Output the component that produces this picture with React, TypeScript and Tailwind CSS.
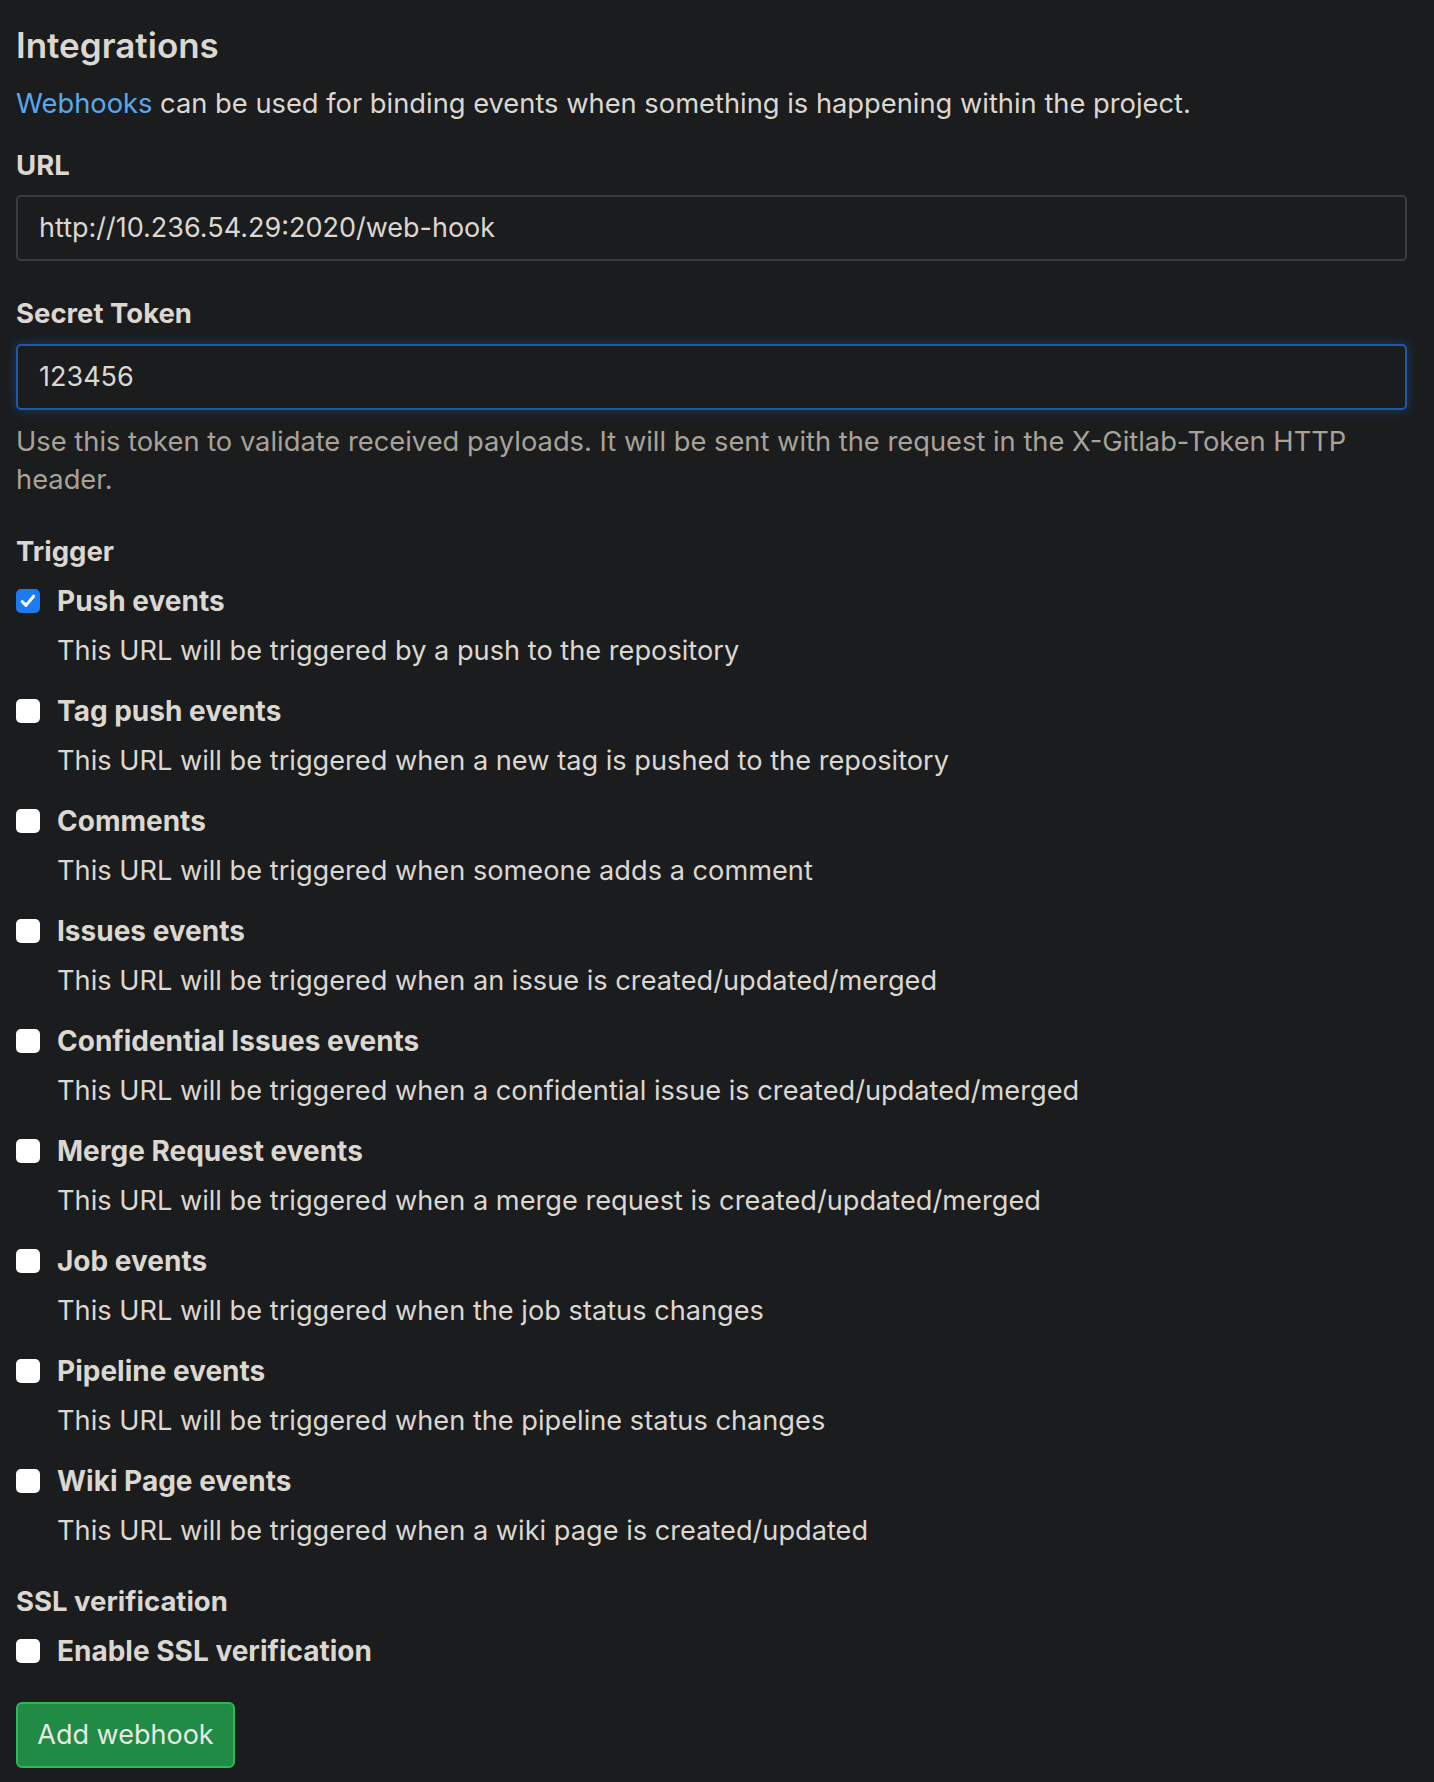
import React from "react";

const triggers = [
  { label: "Push events", desc: "This URL will be triggered by a push to the repository", checked: true },
  { label: "Tag push events", desc: "This URL will be triggered when a new tag is pushed to the repository" },
  { label: "Comments", desc: "This URL will be triggered when someone adds a comment" },
  { label: "Issues events", desc: "This URL will be triggered when an issue is created/updated/merged" },
  { label: "Confidential Issues events", desc: "This URL will be triggered when a confidential issue is created/updated/merged" },
  { label: "Merge Request events", desc: "This URL will be triggered when a merge request is created/updated/merged" },
  { label: "Job events", desc: "This URL will be triggered when the job status changes" },
  { label: "Pipeline events", desc: "This URL will be triggered when the pipeline status changes" },
  { label: "Wiki Page events", desc: "This URL will be triggered when a wiki page is created/updated" },
];

function Box({ checked }: { checked?: boolean }) {
  if (checked) {
    return (
      <span className="flex h-[24px] w-[24px] shrink-0 items-center justify-center rounded-[5px] bg-[#1d7af3]">
        <svg width="18" height="18" viewBox="0 0 18 18" fill="none">
          <path d="M3.2 9.6 L7 13.4 L14.6 4.2" stroke="white" strokeWidth="3" strokeLinecap="round" strokeLinejoin="round" />
        </svg>
      </span>
    );
  }
  return <span className="block h-[24px] w-[24px] shrink-0 rounded-[5px] bg-white" />;
}

export default function App() {
  return (
    <div
      className="min-h-screen bg-[#1b1c1e] pl-[16px] pr-[27px] pt-[25px] pb-[15px] text-[#dbd7d1]"
      style={{ fontFamily: "Inter, 'Noto Sans', sans-serif" }}
    >
      <h3 className="text-[35px] leading-[40px] font-semibold">Integrations</h3>
      <p className="mt-[20px] text-[27.3px] leading-[38px]">
        <span className="text-[#5aa8ec]">Webhooks</span> can be used for binding events when something is happening within the project.
      </p>

      <div className="mt-[23px] text-[27.5px] leading-[38px] font-bold">URL</div>
      <div className="mt-[11px] flex h-[66px] items-center rounded-[5px] border-2 border-[#393d3f] px-[21px] text-[27px]">
        http://10.236.54.29:2020/web-hook
      </div>

      <div className="mt-[33px] text-[27.5px] leading-[38px] font-bold">Secret Token</div>
      <div className="mt-[12px] flex h-[66px] items-center rounded-[5px] border-2 border-[#1f5ba4] px-[21px] text-[27px] shadow-[0_0_10px_2px_rgba(31,91,164,0.35)]">
        123456
      </div>
      <p className="mt-[13px] text-[27.3px] leading-[38px] text-[#a8a298]">
        Use this token to validate received payloads. It will be sent with the request in the X-Gitlab-Token HTTP header.
      </p>

      <div className="mt-[33px] text-[27.5px] leading-[38px] font-bold">Trigger</div>
      <div className="mt-[12px] flex flex-col gap-[22px]">
        {triggers.map((t) => (
          <div key={t.label} className="flex flex-col gap-[12px]">
            <div className="flex items-center gap-[17px] text-[28px] leading-[38px] font-bold">
              <Box checked={t.checked} />
              <span>{t.label}</span>
            </div>
            <div className="pl-[41px] text-[27.2px] leading-[38px]">{t.desc}</div>
          </div>
        ))}
      </div>

      <div className="mt-[32px] text-[27.5px] leading-[38px] font-bold">SSL verification</div>
      <div className="mt-[12px] flex items-center gap-[17px] text-[28px] leading-[38px] font-bold">
        <Box />
        <span>Enable SSL verification</span>
      </div>

      <button className="mt-[32px] flex h-[66px] w-[219px] items-center justify-center rounded-[6px] border-2 border-[#2cb957] bg-[#1f8b45] text-[27px] text-[#e9e7e4]">
        Add webhook
      </button>
    </div>
  );
}
